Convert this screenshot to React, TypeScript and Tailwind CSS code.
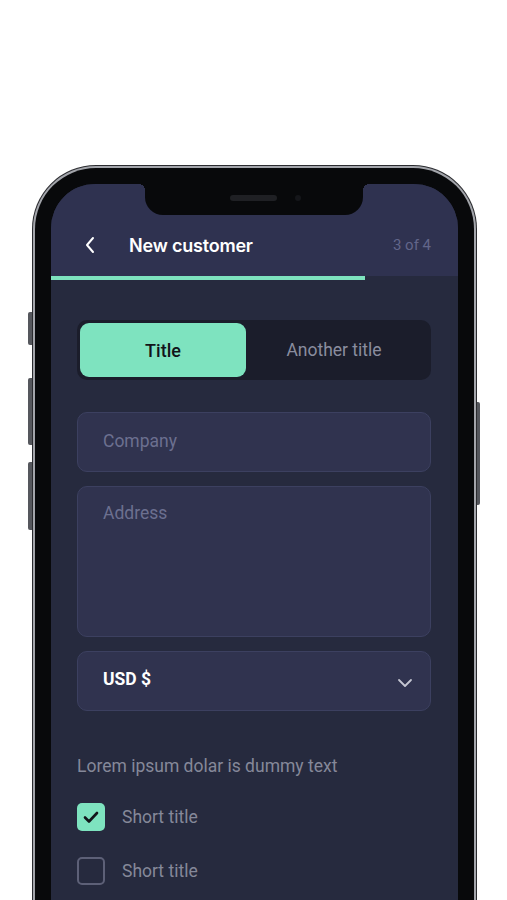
import React from "react";

export default function App() {
  return (
    <div className="w-[507px] h-[900px] bg-white overflow-hidden" style={{ fontFamily: "Roboto, 'Noto Sans', sans-serif" }}>
      <div className="relative ml-[32px] mt-[165px] w-[445px]">
        {/* side buttons */}
        <div className="absolute left-[-4px] top-[147px] w-[4px] h-[33px] rounded-l-[2px] bg-[#55575d]" />
        <div className="absolute left-[-4px] top-[213px] w-[4px] h-[67px] rounded-l-[2px] bg-[#55575d]" />
        <div className="absolute left-[-4px] top-[297px] w-[4px] h-[68px] rounded-l-[2px] bg-[#55575d]" />
        <div className="absolute right-[-3px] top-[237px] w-[3px] h-[103px] rounded-r-[2px] bg-[#55575d]" />
        <div className="rounded-t-[64px] bg-[#2a2b2f] p-[1px]">
          <div className="rounded-t-[63px] bg-[#a3a5ab] p-[2px]">
            <div className="rounded-t-[61px] bg-[#08090b] px-[16px] pt-[16px] h-[760px]">
              <div className="relative rounded-t-[44px] bg-[#262a3e] overflow-hidden h-full">
                {/* notch */}
                <div className="absolute left-[94px] top-0 w-[218px] h-[31px] bg-[#08090b] rounded-b-[18px]">
                  <div className="absolute left-[85px] top-[11px] w-[47px] h-[6px] rounded-full bg-[#1f2024]" />
                  <div className="absolute left-[150px] top-[11px] w-[6px] h-[6px] rounded-full bg-[#15161a]" />
                </div>
                <div className="absolute left-[88px] top-0 w-[6px] h-[6px] bg-[radial-gradient(circle_at_0%_100%,transparent_6px,#08090b_6px)]" />
                <div className="absolute left-[312px] top-0 w-[6px] h-[6px] bg-[radial-gradient(circle_at_100%_100%,transparent_6px,#08090b_6px)]" />

                {/* header */}
                <div className="h-[92px] bg-[#2f3250] flex items-center pt-[30px] pl-[33px] pr-[27px]">
                  <svg width="12" height="18" viewBox="0 0 12 18" fill="none" className="mr-[33px]">
                    <path d="M9 2 L3 9 L9 16" stroke="#ffffff" strokeWidth="2" strokeLinecap="round" strokeLinejoin="round" />
                  </svg>
                  <span className="text-white text-[18px] font-semibold tracking-[-0.2px]" style={{ fontFamily: "Inter, sans-serif" }}>
                    New customer
                  </span>
                  <span className="ml-auto text-[15px] text-[#62668a]">3 of 4</span>
                </div>
                <div className="h-[4px] bg-[#262a3e]">
                  <div className="h-full w-[314px] bg-[#7ee3bf]" />
                </div>

                {/* body */}
                <div className="pl-[26px] pr-[27px] pt-[40px] flex flex-col">
                  <div className="h-[60px] rounded-[10px] bg-[#1b1d2b] p-[3px] flex">
                    <div className="w-[166px] rounded-[9px] bg-[#7ee3bf] flex items-center justify-center text-[18px] font-medium text-[#121419]">
                      Title
                    </div>
                    <div className="flex-1 flex items-center justify-center text-[17.5px] text-[#8a8d9f] pr-[6px]">
                      Another title
                    </div>
                  </div>

                  <div className="mt-[32px] h-[60px] rounded-[10px] bg-[#30334f] border border-[#3c4060] flex items-center px-[25px] pb-[2px] text-[17.5px] text-[#6c7090]">
                    Company
                  </div>
                  <div className="mt-[14px] h-[151px] rounded-[10px] bg-[#30334f] border border-[#3c4060] px-[25px] pt-[13px] text-[17.5px] text-[#6c7090]">
                    Address
                  </div>
                  <div className="mt-[14px] h-[60px] rounded-[10px] bg-[#30334f] border border-[#3c4060] flex items-center pl-[25px] pr-[17px] text-[17.5px] font-bold text-white">
                    <span className="mb-[4px]">USD $</span>
                    <svg width="16" height="10" viewBox="0 0 16 10" fill="none" className="ml-auto mt-[4px]">
                      <path d="M2 2 L8 8 L14 2" stroke="#c4c6d2" strokeWidth="1.8" strokeLinecap="round" strokeLinejoin="round" />
                    </svg>
                  </div>

                  <div className="mt-[43px] text-[17.5px] text-[#858899] leading-[24px]">Lorem ipsum dolar is dummy text</div>

                  <div className="mt-[25px] flex items-center gap-[17px]">
                    <div className="w-[28px] h-[28px] rounded-[5px] bg-[#7ee3bf] flex items-center justify-center">
                      <svg width="16" height="13" viewBox="0 0 16 13" fill="none">
                        <path d="M2 6.5 L6 10.5 L14 2" stroke="#121419" strokeWidth="2.6" strokeLinecap="round" strokeLinejoin="round" />
                      </svg>
                    </div>
                    <span className="text-[17.5px] text-[#858899]">Short title</span>
                  </div>
                  <div className="mt-[26px] flex items-center gap-[17px]">
                    <div className="w-[28px] h-[28px] rounded-[5px] border-2 border-[#5d6077]" />
                    <span className="text-[17.5px] text-[#858899]">Short title</span>
                  </div>
                </div>
              </div>
            </div>
          </div>
        </div>
      </div>
    </div>
  );
}
